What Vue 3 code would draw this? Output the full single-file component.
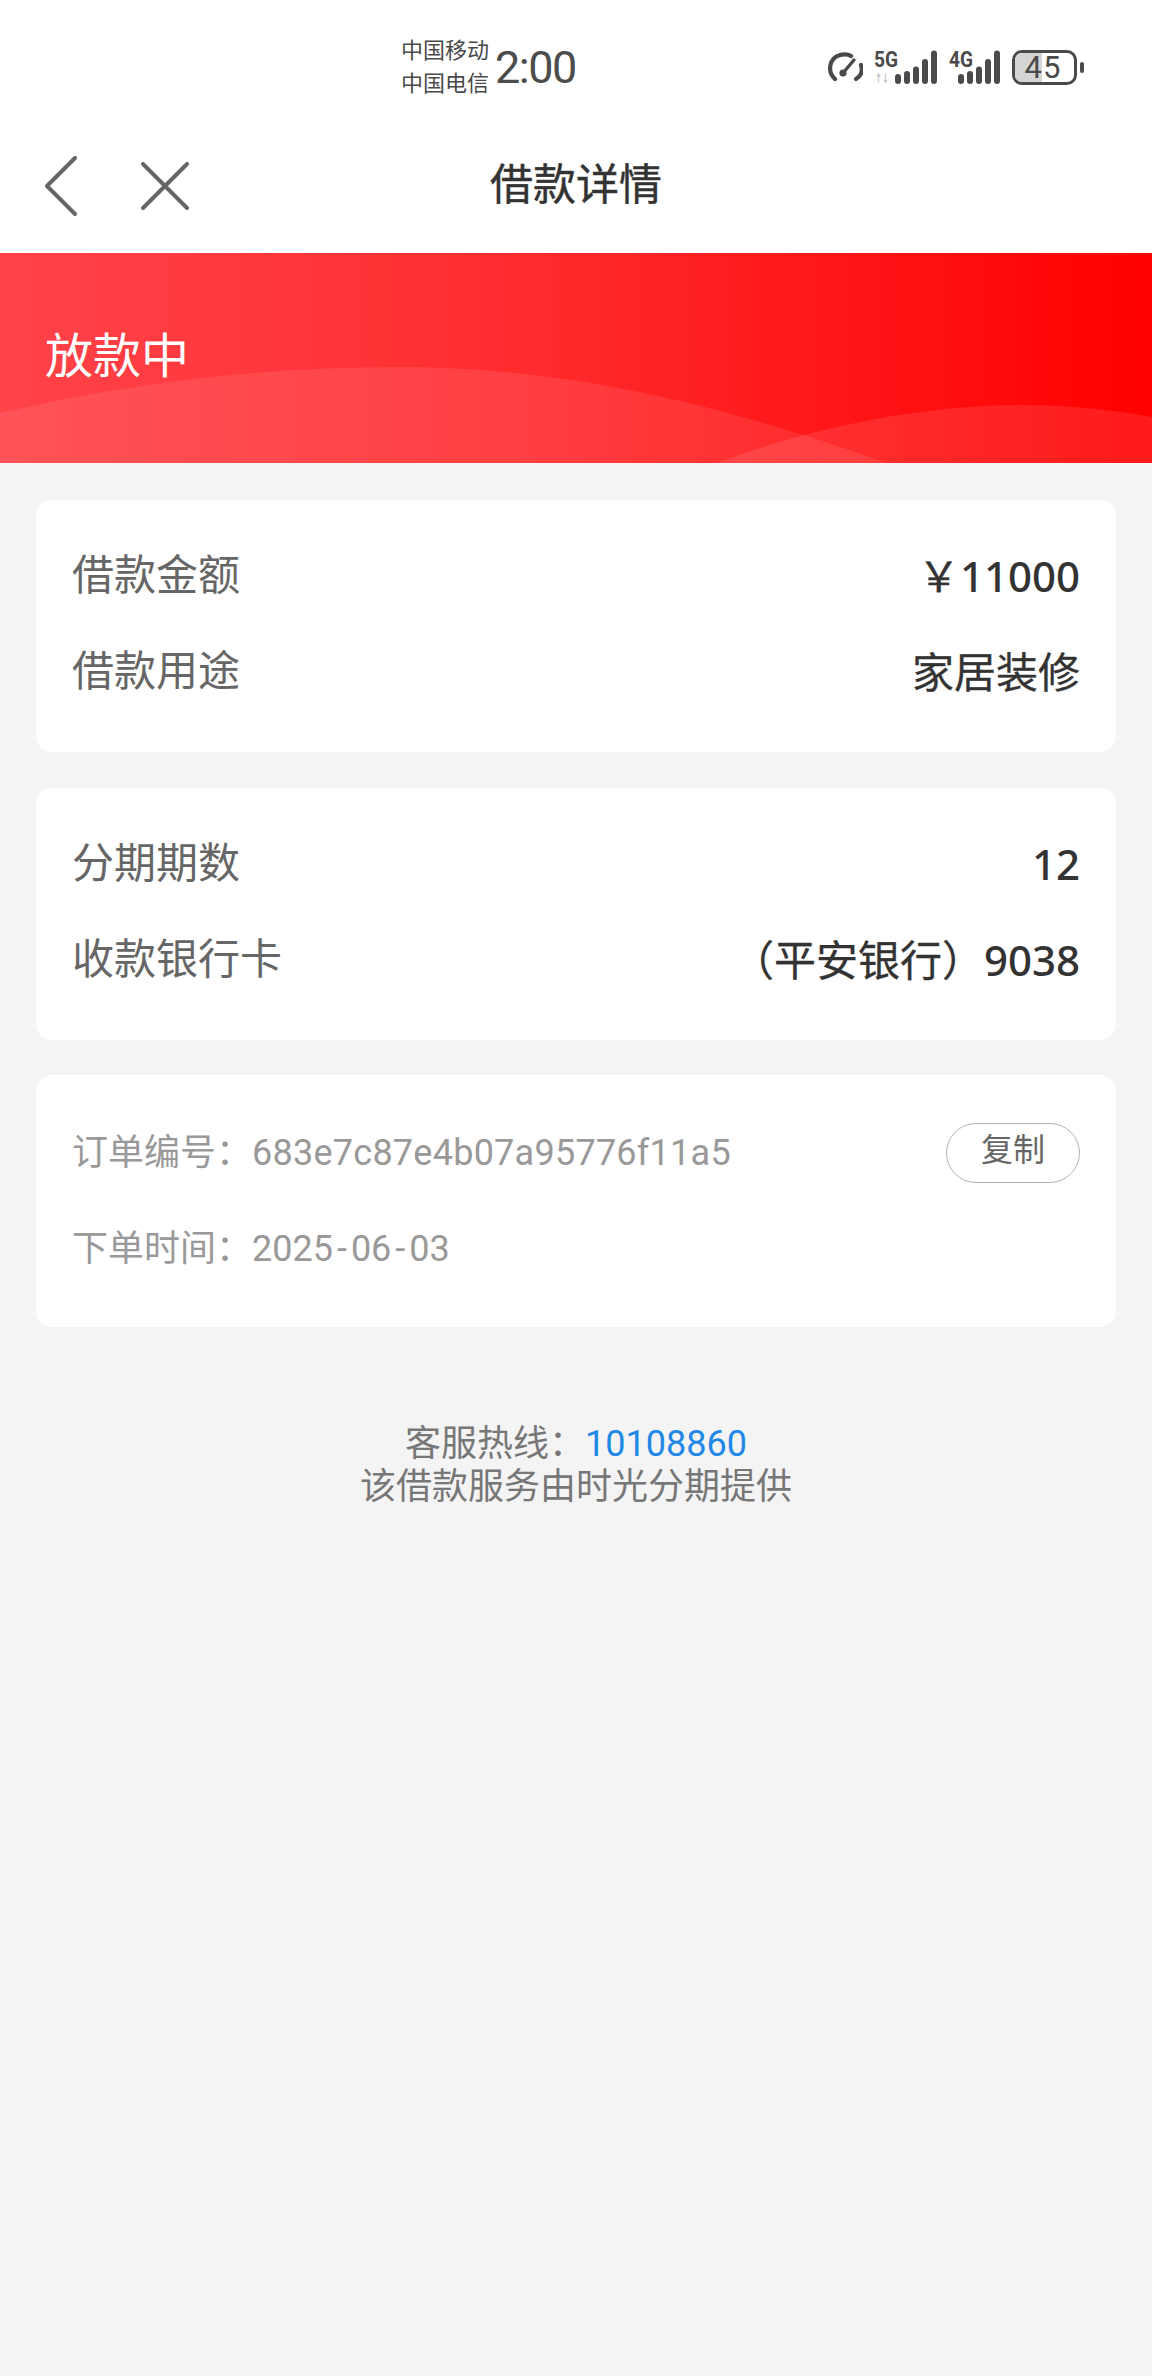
<script setup>
const bars5g = [
  { x: 20, y: 24, h: 10 },
  { x: 29, y: 21, h: 13 },
  { x: 38, y: 16.5, h: 17.5 },
  { x: 47, y: 9, h: 25 },
  { x: 56, y: 0.5, h: 33.5 },
]
const bars4g = [
  { x: 8, y: 24, h: 10 },
  { x: 17, y: 21, h: 13 },
  { x: 26, y: 16.5, h: 17.5 },
  { x: 35, y: 9, h: 25 },
  { x: 44, y: 0.5, h: 33.5 },
]
</script>

<template>
  <div class="page">
    <div class="status">
      <div class="carrier">
        <span>中国移动</span>
        <span>中国电信</span>
      </div>
      <span class="clock">2:00</span>
      <div class="indicators">
        <svg class="gauge" width="35" height="30" viewBox="0 0 35 30" fill="none" stroke="#4a4a4a" stroke-width="4.2" stroke-linecap="round">
          <path d="M7 27 C-1 20 1 6 12 3 C16 2 20 2 23 4" />
          <path d="M33 13 C35 19 33 24 28 27" />
          <path d="M15 21 L26 8" stroke-width="3.4" />
          <circle cx="15" cy="21" r="3.6" fill="#4a4a4a" stroke="none" />
        </svg>
        <svg class="signal" width="63" height="35" viewBox="0 0 63 35" fill="#4a4a4a">
          <text x="-1" y="17" class="net-label" textLength="24" lengthAdjust="spacingAndGlyphs">5G</text>
          <text x="0" y="33" class="net-sub" textLength="14" lengthAdjust="spacingAndGlyphs">↑↓</text>
          <rect v-for="b in bars5g" :key="b.x" :x="b.x" :y="b.y" width="6" :height="b.h" rx="3" />
        </svg>
        <svg class="signal" width="50" height="35" viewBox="0 0 50 35" fill="#4a4a4a">
          <text x="-1" y="17" class="net-label" textLength="24" lengthAdjust="spacingAndGlyphs">4G</text>
          <rect v-for="b in bars4g" :key="b.x" :x="b.x" :y="b.y" width="6" :height="b.h" rx="3" />
        </svg>
        <div class="battery">
          <div class="battery-fill"></div>
          <span>45</span>
        </div>
        <i class="battery-tip"></i>
      </div>
    </div>

    <div class="nav">
      <svg class="back" width="32" height="60" viewBox="0 0 32 60" fill="none" stroke="#666" stroke-width="4" stroke-linecap="round" stroke-linejoin="round">
        <path d="M30 2 L2 30 L30 58" />
      </svg>
      <svg class="close" width="48" height="48" viewBox="0 0 48 48" fill="none" stroke="#666" stroke-width="4" stroke-linecap="round">
        <path d="M2 2 L46 46 M46 2 L2 46" />
      </svg>
      <span class="title">借款详情</span>
    </div>

    <div class="banner">
      <svg class="waves" width="1152" height="210" viewBox="0 0 1152 210" preserveAspectRatio="none">
        <path d="M0 160 C130 130 260 114 400 114 C560 114 720 150 887 210 L0 210 Z" fill="#fff" fill-opacity="0.09" />
        <path d="M717 210 C810 175 920 152 1023 152 C1070 152 1115 157 1152 164 L1152 210 Z" fill="#fff" fill-opacity="0.1" />
      </svg>
      <span class="state">放款中</span>
    </div>

    <div class="content">
      <div class="card">
        <div class="row">
          <span class="label">借款金额</span>
          <span class="value"><span class="yen">￥</span><span class="digits">11000</span></span>
        </div>
        <div class="row">
          <span class="label">借款用途</span>
          <span class="value">家居装修</span>
        </div>
      </div>

      <div class="card">
        <div class="row">
          <span class="label">分期期数</span>
          <span class="value"><span class="digits">12</span></span>
        </div>
        <div class="row">
          <span class="label">收款银行卡</span>
          <span class="value">（平安银行）<span class="digits">9038</span></span>
        </div>
      </div>

      <div class="card card-order">
        <div class="order-row">
          <span>订单编号：<span class="order-no">683e7c87e4b07a95776f11a5</span></span>
          <button type="button" class="copy">复制</button>
        </div>
        <div class="order-row">
          <span>下单时间：2025<span class="dash">-</span>06<span class="dash">-</span>03</span>
        </div>
      </div>

      <div class="footer">
        <div>客服热线：<span class="phone">10108860</span></div>
        <div>该借款服务由时光分期提供</div>
      </div>
    </div>
  </div>
</template>

<style>
html,
body {
  margin: 0;
  background: #f4f4f4;
}
</style>

<style scoped>
.page {
  width: 1152px;
  height: 2376px;
  background: #f4f4f4;
  font-family: Roboto, "Noto Sans CJK SC", sans-serif;
  overflow: hidden;
}

.status {
  height: 126px;
  background: #fff;
  display: flex;
  align-items: center;
  box-sizing: border-box;
  padding: 8px 0 0 401px;
  color: #4a4a4a;
}

.carrier {
  display: flex;
  flex-direction: column;
  font-size: 22px;
  line-height: 33px;
  width: 94px;
}

.clock {
  width: 80px;
  font-size: 45px;
  line-height: 64px;
  letter-spacing: -1.5px;
  color: #4c4c4c;
  padding-top: 2px;
}

.indicators {
  display: flex;
  align-items: center;
  margin-left: 253px;
}

.signal {
  margin-left: 12px;
  overflow: visible;
}

.net-label {
  font-family: Roboto, sans-serif;
  font-size: 22px;
  font-weight: 700;
}

.net-sub {
  font-family: "DejaVu Sans", sans-serif;
  font-size: 13px;
  font-weight: 700;
  fill: #c4c4c4;
}

.battery {
  position: relative;
  width: 65px;
  height: 35px;
  margin-left: 12px;
  box-sizing: border-box;
  border: 3px solid #4a4a4a;
  border-radius: 10px;
  overflow: hidden;
  display: flex;
  align-items: center;
  justify-content: center;
  font-size: 31px;
  letter-spacing: 1px;
  line-height: 29px;
}

.battery span {
  position: relative;
  margin-right: 3px;
}

.battery-fill {
  position: absolute;
  left: 0;
  top: 0;
  bottom: 0;
  width: 46%;
  background: #d4d4d4;
}

.battery-tip {
  display: block;
  width: 4px;
  height: 11px;
  margin-left: 3px;
  border-radius: 2px;
  background: #4a4a4a;
}

.nav {
  height: 127px;
  background: #fff;
  position: relative;
  display: flex;
  align-items: center;
  justify-content: center;
}

.back {
  position: absolute;
  left: 45px;
  top: 30px;
}

.close {
  position: absolute;
  left: 141px;
  top: 36px;
}

.title {
  font-size: 43px;
  line-height: 60px;
  color: #333;
  margin-bottom: 10px;
  -webkit-text-stroke: 0.4px #333;
}

.banner {
  position: relative;
  height: 210px;
  background: linear-gradient(90deg, #ff4349 0%, #ff2c2f 45%, #ff0000 100%);
  display: flex;
  align-items: center;
  box-sizing: border-box;
  padding: 0 0 12px 45px;
}

.waves {
  position: absolute;
  left: 0;
  top: 0;
}

.state {
  position: relative;
  font-size: 48px;
  color: #fff;
}

.content {
  padding: 37px 36px 0;
  display: flex;
  flex-direction: column;
  gap: 35.5px;
}

.card {
  background: #fff;
  border-radius: 16px;
  height: 252px;
  box-sizing: border-box;
  padding: 28px 36px 32px;
  display: flex;
  flex-direction: column;
}

.row {
  height: 96px;
  display: flex;
  align-items: center;
  justify-content: space-between;
}

.label {
  font-size: 42px;
  line-height: 60px;
  color: #666;
}

.value {
  font-family: "Noto Sans", "Noto Sans CJK SC", sans-serif;
  font-size: 42px;
  line-height: 60px;
  color: #333;
  -webkit-text-stroke: 0.3px #333;
}

.digits {
  font-weight: 500;
  -webkit-text-stroke: 0;
}

.card-order {
  padding: 26px 36px 34px;
  font-size: 36px;
  color: #999;
}

.order-row {
  height: 96px;
  display: flex;
  align-items: center;
  justify-content: space-between;
}

.order-no {
  letter-spacing: 0.25px;
}

.dash {
  margin: 0 4px;
}

.copy {
  width: 134px;
  height: 60px;
  border: 1px solid #b4b4b4;
  border-radius: 30px;
  background: #fff;
  color: #666;
  font-family: inherit;
  font-size: 32px;
  line-height: 50px;
  padding: 0 0 6px;
  margin-top: 8px;
}

.footer {
  margin-top: 60px;
  text-align: center;
  font-size: 36px;
  line-height: 43px;
  color: #777;
}

.phone {
  color: #2288e8;
}
</style>
